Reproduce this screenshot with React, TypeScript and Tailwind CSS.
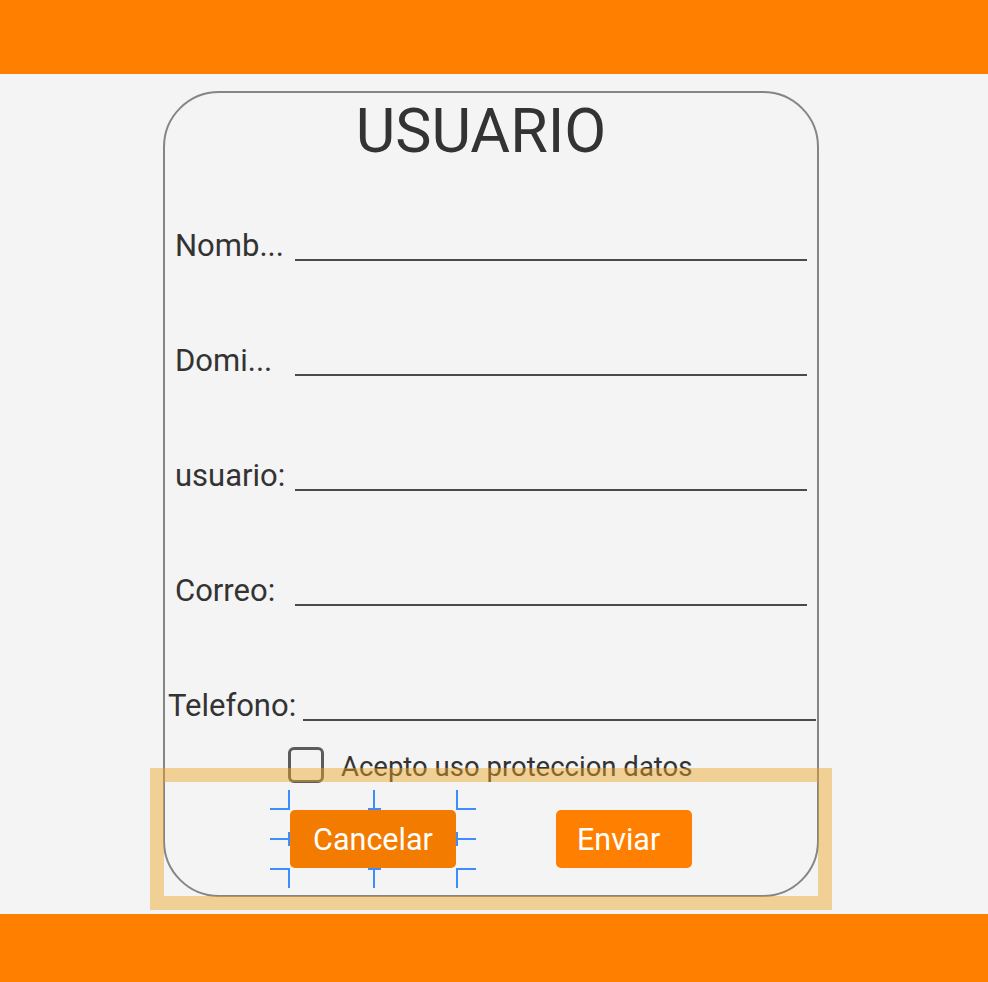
import React from "react";

const font = { fontFamily: "Roboto, 'Noto Sans', sans-serif" };

function Row({ label, wide }: { label: string; wide?: boolean }) {
  return (
    <div className={wide ? "flex h-[115px] pl-[3px] pr-[1px]" : "flex h-[115px] pl-[10px] pr-[10px]"}>
      <span className={wide ? "w-[135px] shrink-0 text-[31px] leading-[36px] text-[#333]" : "w-[120px] shrink-0 text-[31px] leading-[36px] text-[#333]"}>
        {label}
      </span>
      <div className="mt-[31px] h-[2px] flex-1 bg-[#4a4a4a]" />
    </div>
  );
}

function Handles() {
  const c = "#3e8dff";
  const s = 2;
  return (
    <svg className="pointer-events-none absolute left-[268px] top-[788px]" width="210" height="102" viewBox="268 788 210 102">
      <g stroke={c} strokeWidth={s} fill="none">
        <path d="M270 809 H289 V790" />
        <path d="M374 790 V809 M368 809 H381" />
        <path d="M457 790 V809 H476" />
        <path d="M270 839 H289 M289 832 V846" />
        <path d="M457 839 H476 M457 832 V846" />
        <path d="M270 869 H289 V888" />
        <path d="M374 888 V869 M368 869 H381" />
        <path d="M457 888 V869 H476" />
      </g>
    </svg>
  );
}

export default function App() {
  return (
    <div className="relative h-[982px] w-[988px] overflow-hidden bg-[#f4f4f4]" style={font}>
      <div className="flex h-full flex-col">
        <div className="h-[74px] shrink-0 bg-[#ff8000]" />
        <div className="flex-1 pt-[17px]">
          <div className="ml-[163px] h-[806px] w-[656px] rounded-[56px] border-2 border-[#858585]">
            <div className="pt-[2px] pr-[20px] text-center text-[61px] leading-[72px] text-[#333]">USUARIO</div>
            <div className="mt-[61px]">
              <Row label="Nomb..." />
              <Row label="Domi..." />
              <Row label="usuario:" />
              <Row label="Correo:" />
              <Row label="Telefono:" wide />
            </div>
            <div className="-mt-[56px] flex h-[36px] items-center pl-[123px]">
              <div className="h-[36px] w-[36px] rounded-[6px] border-[3px] border-[#5c5c5c]" />
              <span className="ml-[17px] mt-[3px] text-[27.5px] leading-[34px] text-[#333]">Acepto uso proteccion datos</span>
            </div>
            <div className="mt-[27px] flex pl-[125px]">
              <button className="flex h-[58px] w-[166px] items-center justify-center rounded-[5px] bg-[#f27b00] pt-[1px] text-[30.5px] text-white">
                Cancelar
              </button>
              <button className="ml-[100px] flex h-[58px] w-[136px] items-center justify-start rounded-[5px] bg-[#ff8000] pl-[21px] pt-[1px] text-[30.5px] text-white">
                Enviar
              </button>
            </div>
          </div>
        </div>
        <div className="h-[68px] shrink-0 bg-[#ff8000]" />
      </div>
      <div className="pointer-events-none absolute left-[150px] top-[768px] h-[142px] w-[682px] border-[14px] border-[rgba(235,164,33,0.45)]" />
      <Handles />
    </div>
  );
}
